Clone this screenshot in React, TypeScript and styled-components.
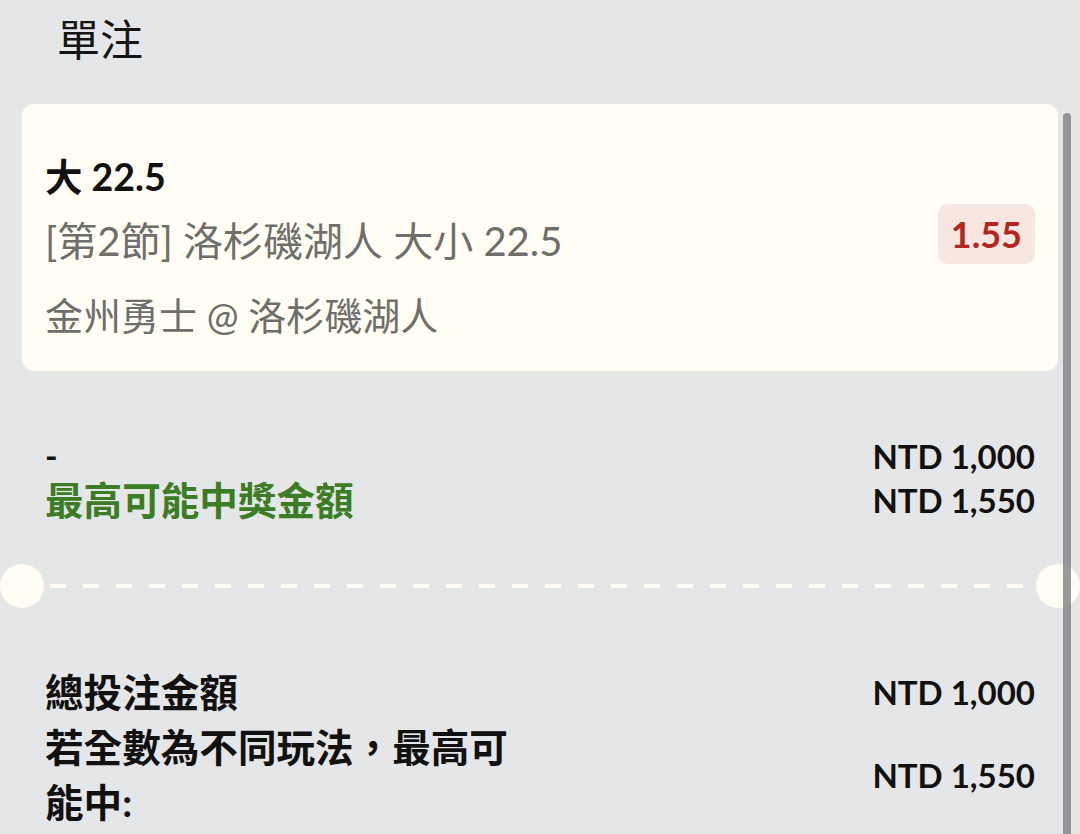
import React from "react";
import styled, { createGlobalStyle } from "styled-components";

const GlobalStyle = createGlobalStyle`
  html, body {
    margin: 0;
    padding: 0;
    background: #e5e6e8;
  }
  body {
    font-family: Lato, "Noto Sans CJK TC", "Noto Sans", sans-serif;
    color: #111;
    overflow: hidden;
  }
`;

const Page = styled.div`
  position: relative;
  width: 1080px;
  height: 834px;
  overflow: hidden;
  background: #e5e6e8;
`;

const Title = styled.h1`
  margin: 0;
  padding: 10px 0 0 57px;
  height: 104px;
  box-sizing: border-box;
  font-size: 43px;
  line-height: 60px;
  font-weight: 400;
  color: #151515;
`;

const Card = styled.div`
  margin: 0 22px;
  height: 267px;
  box-sizing: border-box;
  padding: 45px 23px 28px 23px;
  background: #fffdf4;
  border-radius: 12px;
  display: flex;
  align-items: center;
  justify-content: space-between;
`;

const CardInfo = styled.div`
  display: flex;
  flex-direction: column;
`;

const Selection = styled.div`
  font-size: 37.5px;
  line-height: 56px;
  font-weight: 700;
  color: #111;
`;

const Detail = styled.div<{ $gap: number; $size?: number }>`
  margin-top: ${(p) => p.$gap}px;
  font-size: ${(p) => p.$size ?? 38}px;
  line-height: 56px;
  color: #6e6e6c;
  font-weight: 400;
`;

const Odds = styled.div`
  margin-bottom: 24px;
  height: 60px;
  padding: 0 13px;
  display: flex;
  align-items: center;
  background: #f8e7e0;
  border-radius: 10px;
  color: #b3261e;
  font-size: 36px;
  font-weight: 700;
`;

const Summary = styled.div<{ $top: number }>`
  margin-top: ${(p) => p.$top}px;
  padding: 0 45px;
  display: flex;
  flex-direction: column;
`;

const Row = styled.div<{ $lh: number }>`
  display: flex;
  align-items: center;
  justify-content: space-between;
  line-height: ${(p) => p.$lh}px;
`;

const Label = styled.div<{ $green?: boolean; $size?: number }>`
  max-width: 480px;
  font-size: ${(p) => p.$size ?? 38.6}px;
  font-weight: 700;
  color: ${(p) => (p.$green ? "#3b7c24" : "#111")};
`;

const Amount = styled.div`
  font-size: 33px;
  font-weight: 700;
  color: #111;
  white-space: nowrap;
`;

const Divider = styled.div`
  margin-top: 42px;
  height: 44px;
  display: flex;
  align-items: center;
`;

const Notch = styled.div`
  flex: none;
  width: 44px;
  height: 44px;
  border-radius: 50%;
  background: #fffdf4;
`;

const Dashes = styled.div`
  flex: 1;
  height: 4px;
  margin: 0 6px;
  background: repeating-linear-gradient(
    to right,
    #fffdf4 0 16px,
    transparent 16px 33px
  );
`;

const ScrollThumb = styled.div`
  position: absolute;
  right: 9px;
  top: 113px;
  bottom: 0;
  width: 8px;
  border-radius: 4px 4px 0 0;
  background: rgba(128, 128, 132, 0.8);
`;

export default function App() {
  return (
    <>
      <GlobalStyle />
      <Page>
        <Title>單注</Title>
        <Card>
          <CardInfo>
            <Selection>大 22.5</Selection>
            <Detail $gap={8} $size={40}>
              [第2節] 洛杉磯湖人 大小 22.5
            </Detail>
            <Detail $gap={18}>金州勇士 @ 洛杉磯湖人</Detail>
          </CardInfo>
          <Odds>1.55</Odds>
        </Card>

        <Summary $top={63}>
          <Row $lh={44}>
            <Label $size={34}>-</Label>
            <Amount>NTD 1,000</Amount>
          </Row>
          <Row $lh={44}>
            <Label $green>最高可能中獎金額</Label>
            <Amount>NTD 1,550</Amount>
          </Row>
        </Summary>

        <Divider>
          <Notch />
          <Dashes />
          <Notch />
        </Divider>

        <Summary $top={57}>
          <Row $lh={55}>
            <Label>總投注金額</Label>
            <Amount>NTD 1,000</Amount>
          </Row>
          <Row $lh={55}>
            <Label>若全數為不同玩法，最高可能中:</Label>
            <Amount>NTD 1,550</Amount>
          </Row>
        </Summary>

        <ScrollThumb />
      </Page>
    </>
  );
}
